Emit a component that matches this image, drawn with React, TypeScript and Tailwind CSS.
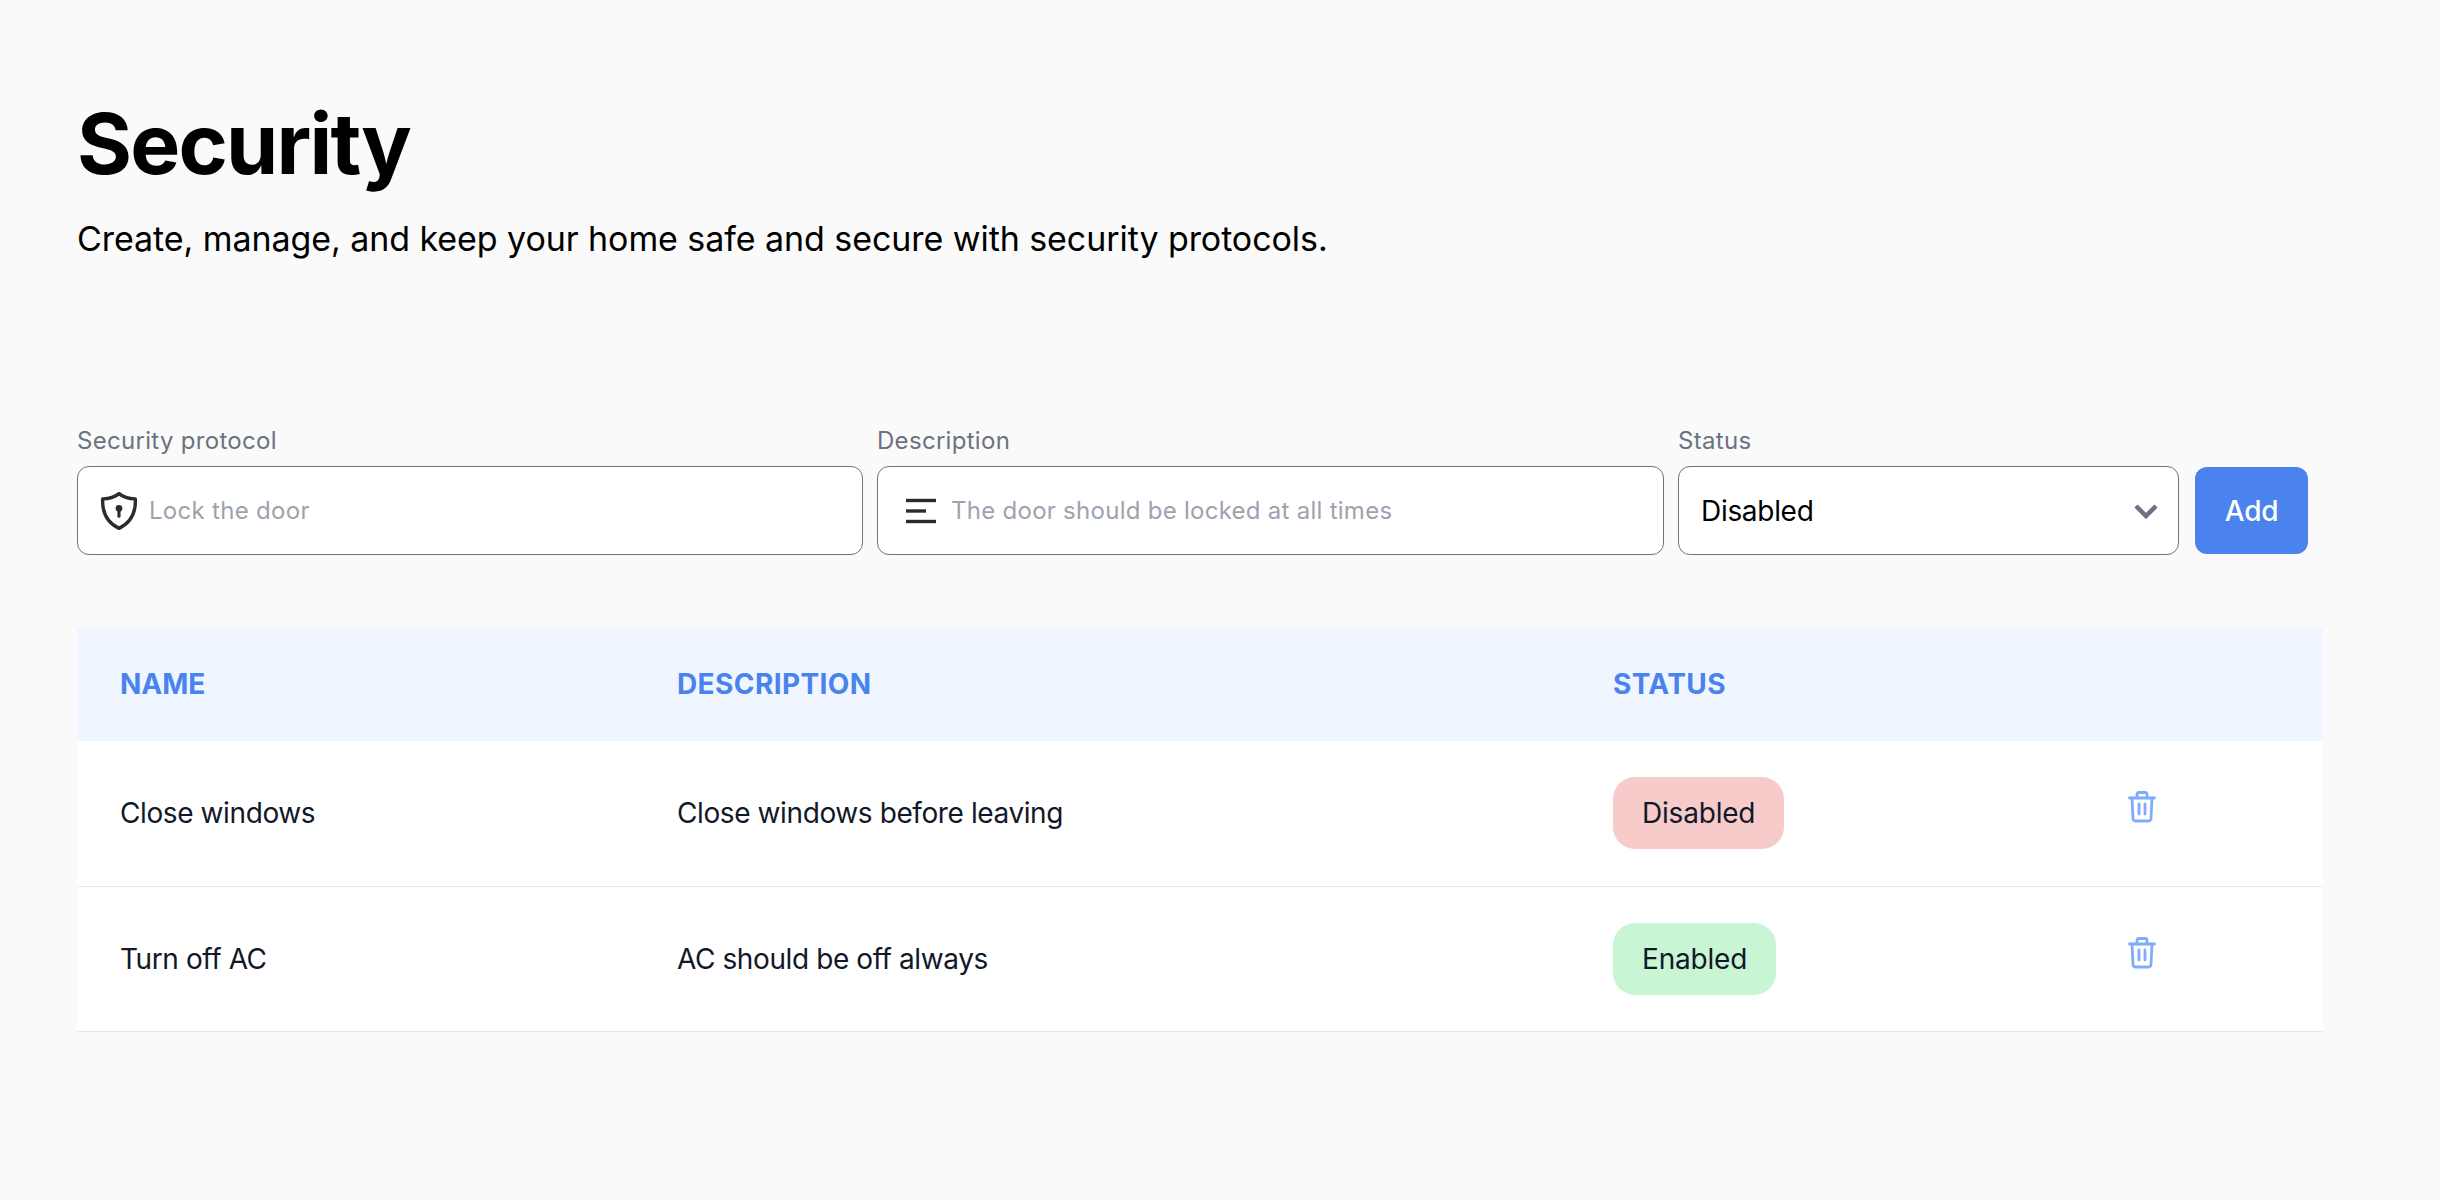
const rows = [
  { name: 'Close windows', description: 'Close windows before leaving', status: 'Disabled' },
  { name: 'Turn off AC', description: 'AC should be off always', status: 'Enabled' },
]

function ShieldIcon() {
  return (
    <svg width="40" height="40" viewBox="0 0 38 38" fill="none" stroke="#2b2b2b" strokeWidth="3.2" strokeLinejoin="round" className="shrink-0">
      <path d="M19 2.5C15 6 10.5 7.3 3.5 7.5C3 18 5.5 29 19 35.5C32.5 29 35 18 34.5 7.5C27.5 7.3 23 6 19 2.5Z" />
      <circle cx="19" cy="16.5" r="3.2" fill="#2b2b2b" stroke="none" />
      <path d="M19 17V24" strokeLinecap="round" strokeWidth="3" />
    </svg>
  )
}

function LinesIcon() {
  return (
    <svg width="32" height="26" viewBox="0 0 32 26" fill="none" stroke="#2b2b2b" strokeWidth="3.4" className="shrink-0">
      <path d="M1 2.5H31" />
      <path d="M1 13H21" />
      <path d="M1 23.5H31" />
    </svg>
  )
}

function TrashIcon() {
  return (
    <svg width="28" height="32" viewBox="0 0 28 32" fill="none" stroke="#80abfb" strokeWidth="2.8" strokeLinecap="round" strokeLinejoin="round">
      <path d="M1.5 7H26.5" />
      <path d="M9 7V3.5C9 2.4 9.8 1.5 11 1.5H17C18.2 1.5 19 2.4 19 3.5V7" />
      <path d="M4 7L5 27.5C5.1 29 6.2 30 7.5 30H20.5C21.8 30 22.9 29 23 27.5L24 7" />
      <path d="M11 13V23" />
      <path d="M17 13V23" />
    </svg>
  )
}

export default function App() {
  return (
    <div className="min-h-[1200px] bg-[#fafafa] px-[77px] pt-[94px] text-black" style={{ fontFamily: 'Inter, sans-serif' }}>
      <h1 className="text-[84px] leading-[100px] font-bold tracking-[-1.8px]">Security</h1>
      <p className="mt-[21px] text-[34px] leading-[48px] tracking-[-0.07px]">Create, manage, and keep your home safe and secure with security protocols.</p>

      <div className="mt-[162px] flex items-end">
        <div className="w-[786px]">
          <label className="block text-[24px] leading-[32px] tracking-[0.3px] text-[#6b7280]">Security protocol</label>
          <div className="mt-[9px] flex h-[89px] items-center rounded-[12px] border border-[#6b7280] bg-white pl-[21px]">
            <ShieldIcon />
            <span className="ml-[10px] text-[24px] tracking-[0.3px] text-[#9ca3af]">Lock the door</span>
          </div>
        </div>
        <div className="ml-[14px] w-[787px]">
          <label className="block text-[24px] leading-[32px] tracking-[0.3px] text-[#6b7280]">Description</label>
          <div className="mt-[9px] flex h-[89px] items-center rounded-[12px] border border-[#6b7280] bg-white pl-[27px]">
            <LinesIcon />
            <span className="ml-[14px] text-[24px] tracking-[0.27px] text-[#9ca3af]">The door should be locked at all times</span>
          </div>
        </div>
        <div className="ml-[14px] w-[501px]">
          <label className="block text-[24px] leading-[32px] tracking-[0.3px] text-[#6b7280]">Status</label>
          <div className="mt-[9px] flex h-[89px] items-center justify-between rounded-[12px] border border-[#6b7280] bg-white pr-[20px] pl-[22px]">
            <span className="text-[28px] tracking-[-0.3px]">Disabled</span>
            <svg width="24" height="16" viewBox="0 0 24 16" fill="none" stroke="#6b7280" strokeWidth="4.5">
              <path d="M2 3L12 13L22 3" />
            </svg>
          </div>
        </div>
        <button className="mb-[1px] ml-[16px] h-[87px] w-[113px] rounded-[12px] bg-[#4a83ed] text-[28px] font-medium tracking-[-0.3px] text-white">Add</button>
      </div>

      <table className="mt-[72px] w-[2246px] table-fixed border-collapse">
        <thead className="bg-[#eff6ff]">
          <tr className="h-[114px] text-left text-[28px] font-bold tracking-[0.4px] text-[#4a83ed]">
            <th className="w-[557px] pl-[43px] font-bold tracking-[0px]">NAME</th>
            <th className="w-[936px] pl-[43px] font-bold">DESCRIPTION</th>
            <th className="w-[514px] pl-[43px] font-bold">STATUS</th>
            <th />
          </tr>
        </thead>
        <tbody className="bg-white text-[28px] tracking-[-0.4px] text-[#111827]">
          {rows.map((row) => (
            <tr key={row.name} className="h-[145px] border-b border-[#e5e7eb]">
              <td className="pl-[43px]">{row.name}</td>
              <td className="pl-[43px]">{row.description}</td>
              <td className="pl-[43px]">
                <span className={`inline-block rounded-[22px] px-[29px] py-[18px] leading-[36px] tracking-[-0.2px] ${row.status === 'Disabled' ? 'bg-[#f6cbca]' : 'bg-[#c8f5d4]'}`}>
                  {row.status}
                </span>
              </td>
              <td className="pl-[43px]">
                <button className="block -translate-y-[6px] translate-x-[1px]"><TrashIcon /></button>
              </td>
            </tr>
          ))}
        </tbody>
      </table>
    </div>
  )
}
